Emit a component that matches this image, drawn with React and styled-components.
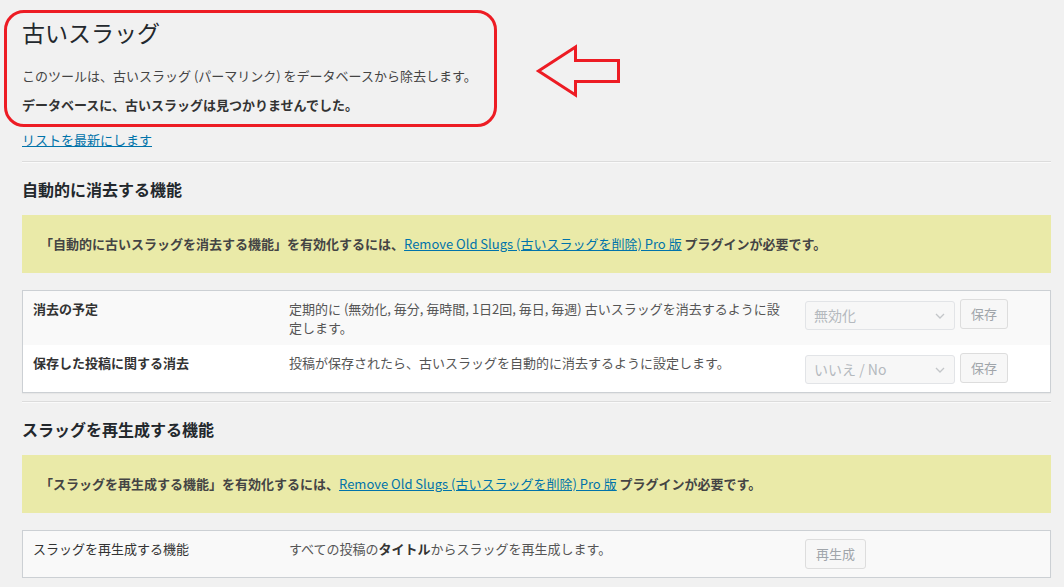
import styled, { createGlobalStyle } from "styled-components";

const GlobalStyle = createGlobalStyle`
  html, body {
    margin: 0;
    padding: 0;
    background: #f1f1f1;
  }
  body {
    font-family: "Noto Sans CJK JP", "Noto Sans", sans-serif;
    font-size: 13px;
    color: #444;
  }
`;

const ArrowIcon = () => (
  <Arrow width="90" height="60" viewBox="0 0 90 60">
    <polygon
      points="3.5,29 40.5,5 40.5,18.5 83.5,18.5 83.5,39.5 40.5,39.5 40.5,53"
      fill="none"
      stroke="#ed1c24"
      strokeWidth="3"
      strokeLinejoin="miter"
    />
  </Arrow>
);

const SettingRow = ({ label, bold = true, children, control, striped }) => (
  <Row $striped={striped}>
    <LabelCell $bold={bold}>{label}</LabelCell>
    <DescCell>{children}</DescCell>
    <ControlCell>{control}</ControlCell>
  </Row>
);

const SelectBox = ({ value }) => (
  <Select>
    <span>{value}</span>
    <svg width="10" height="6" viewBox="0 0 10 6">
      <path d="M1 1l4 4 4-4" fill="none" stroke="#c3c6c9" strokeWidth="1.3" />
    </svg>
  </Select>
);

const ProNotice = ({ feature }) => (
  <Notice>
    「{feature}」を有効化するには、
    <NoticeLink href="#">Remove Old Slugs (古いスラッグを削除) Pro 版</NoticeLink>{" "}
    プラグインが必要です。
  </Notice>
);

export default function App() {
  return (
    <>
      <GlobalStyle />
      <Page>
        <ArrowIcon />
        <RedBox>
          <Title>古いスラッグ</Title>
          <Para>このツールは、古いスラッグ (パーマリンク) をデータベースから除去します。</Para>
          <StrongPara>データベースに、古いスラッグは見つかりませんでした。</StrongPara>
        </RedBox>
        <RefreshLink href="#">リストを最新にします</RefreshLink>

        <Divider />
        <SectionTitle>自動的に消去する機能</SectionTitle>
        <ProNotice feature="自動的に古いスラッグを消去する機能" />
        <Table>
          <SettingRow
            striped
            label="消去の予定"
            control={
              <>
                <SelectBox value="無効化" />
                <DisabledButton>保存</DisabledButton>
              </>
            }
          >
            定期的に (無効化, 毎分, 毎時間, 1日2回, 毎日, 毎週) 古いスラッグを消去するように設定します。
          </SettingRow>
          <SettingRow
            label="保存した投稿に関する消去"
            control={
              <>
                <SelectBox value="いいえ / No" />
                <DisabledButton>保存</DisabledButton>
              </>
            }
          >
            投稿が保存されたら、古いスラッグを自動的に消去するように設定します。
          </SettingRow>
        </Table>

        <Divider />
        <SectionTitle>スラッグを再生成する機能</SectionTitle>
        <ProNotice feature="スラッグを再生成する機能" />
        <Table>
          <SettingRow
            striped
            bold={false}
            label="スラッグを再生成する機能"
            control={<DisabledButton>再生成</DisabledButton>}
          >
            すべての投稿の<b>タイトル</b>からスラッグを再生成します。
          </SettingRow>
        </Table>
      </Page>
    </>
  );
}

const Page = styled.div`
  position: relative;
  padding: 10px 13px 0 22px;
`;

const Arrow = styled.svg`
  position: absolute;
  left: 535px;
  top: 42px;
`;

const RedBox = styled.div`
  box-sizing: border-box;
  width: 493px;
  height: 117px;
  margin-left: -18px;
  padding: 5px 15px 0;
  border: 3px solid #ed1c24;
  border-radius: 20px;
`;

const Title = styled.h1`
  margin: 0;
  font-size: 23px;
  line-height: 29px;
  font-weight: 400;
  color: #23282d;
`;

const Para = styled.p`
  margin: 19px 0 0;
  line-height: 19px;
`;

const StrongPara = styled(Para)`
  margin-top: 10px;
  font-weight: 700;
  color: #333;
`;

const RefreshLink = styled.a`
  display: inline-block;
  margin-top: 3px;
  line-height: 19px;
  color: #0073aa;
  text-decoration: underline;
`;

const Divider = styled.hr`
  margin: 12px 0 0;
  border: 0;
  border-top: 1px solid #dcdcdc;
  border-bottom: 1px solid #fafafa;
  height: 0;
`;

const SectionTitle = styled.h2`
  margin: 15px 0 0;
  font-size: 16px;
  line-height: 22px;
  font-weight: 700;
  color: #23282d;
`;

const Notice = styled.div`
  margin-top: 15px;
  padding: 19px 18px 20px;
  background: #eaeaa8;
  line-height: 19px;
  font-weight: 700;
  color: #444;
`;

const NoticeLink = styled.a`
  color: #0073aa;
  font-weight: 400;
  text-decoration: underline;
`;

const Table = styled.div`
  margin-top: 17px;
  border: 1px solid #ccd0d4;
  box-shadow: 0 1px 1px rgba(0, 0, 0, 0.04);
  background: #fff;
  & + ${Divider} {
    margin-top: 8px;
  }
`;

const Row = styled.div`
  display: grid;
  grid-template-columns: 256px 516px 1fr;
  background: ${(p) => (p.$striped ? "#f9f9f9" : "#fff")};
`;

const Cell = styled.div`
  box-sizing: border-box;
  padding: 8px 10px;
  line-height: 19px;
`;

const LabelCell = styled(Cell)`
  font-weight: ${(p) => (p.$bold ? 700 : 400)};
  color: #333;
`;

const DescCell = styled(Cell)`
  color: #555;
  b {
    color: #333;
  }
`;

const ControlCell = styled(Cell)`
  display: flex;
  align-items: flex-start;
  gap: 5px;
`;

const Select = styled.div`
  box-sizing: border-box;
  display: flex;
  align-items: center;
  justify-content: space-between;
  width: 150px;
  height: 29px;
  margin-top: 2px;
  padding: 0 9px 0 8px;
  border: 1px solid #e2e4e7;
  border-radius: 3px;
  background: #f7f7f7;
  color: #b4b9be;
  font-size: 14px;
`;

const DisabledButton = styled.button`
  box-sizing: border-box;
  height: 30px;
  padding: 0 10px;
  border: 1px solid #dddddd;
  border-radius: 3px;
  background: #f7f7f7;
  color: #a0a5aa;
  font-family: inherit;
  font-size: 13px;
  line-height: 28px;
`;
